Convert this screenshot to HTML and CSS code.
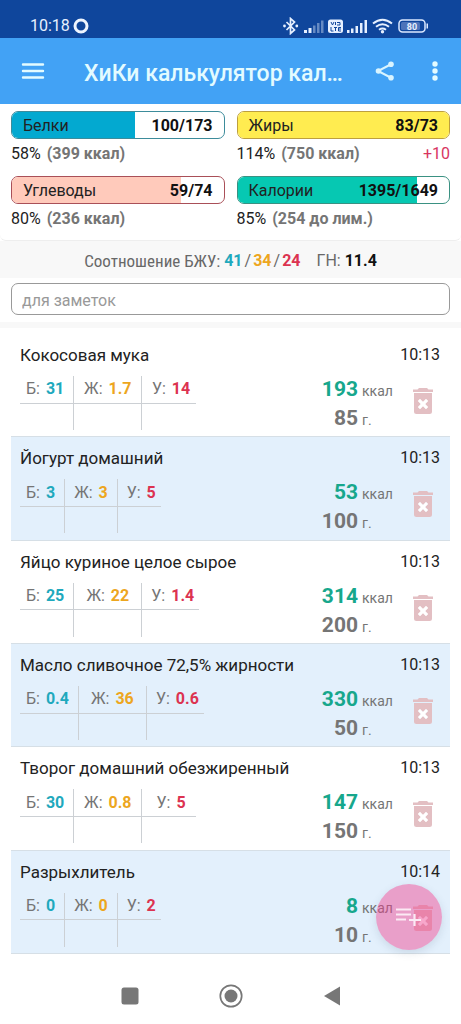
FILE: index.html
```html
<!DOCTYPE html>
<html lang="ru">
<head>
<meta charset="utf-8">
<meta name="viewport" content="width=device-width, initial-scale=1">
<title>ХиКи калькулятор калорий</title>
<link rel="stylesheet" href="styles.css">
</head>
<body>
<svg class="sprite" aria-hidden="true">
  <symbol id="trash" viewBox="0 0 22 28">
    <path fill="#e3bfc3" d="M7 1h8l1.500 1.500H21V5H1V2.500h4.500z"/>
    <path fill="#e3bfc3" fill-rule="evenodd" d="M2 6h18v18.500a2.500 2.500 0 0 1-2.500 2.500h-13A2.500 2.500 0 0 1 2 24.500zM8 12l-2 2 3 3-3 3 2 2 3-3 3 3 2-2-3-3 3-3-2-2-3 3z"/>
    <path class="cross" d="M8 12l-2 2 3 3-3 3 2 2 3-3 3 3 2-2-3-3 3-3-2-2-3 3z"/>
  </symbol>
</svg>
<div class="screen">
  <div class="status">
    <span class="clock">10:18</span>
    <svg class="ring" viewBox="0 0 16 16"><circle cx="8" cy="8" r="6" fill="none" stroke="#eef5ff" stroke-width="3"/></svg>
    <svg class="signals" viewBox="0 0 146 18" aria-hidden="true">
      <g fill="none" stroke="#e6f0ff" stroke-width="1.700"><path d="M3.500 5l8 8-4 3.500v-15l4 3.500-8 8"/></g>
      <circle cx="1.500" cy="9" r="1.400" fill="#e6f0ff"/><circle cx="13.800" cy="9" r="1.400" fill="#e6f0ff"/>
      <g fill="#e6f0ff"><path d="M21 13h3v3h-3zM25.500 11h3v5h-3z"/><path opacity=".4" d="M30 8.500h2.500V16H30zM34 6h2.500v10H34zM38 3.500h2.500V16H38z"/>
      <rect x="45" y="2.500" width="15" height="13.500" rx="2.500"/>
      <path d="M64 13h2.500v3H64zM68 11.500h2.500V16H68zM72.500 9H75v7h-2.500zM77 6h2.500v10H77zM81.500 3H84v13h-2.500z"/></g>
      <path d="M48 5l1.500 3L51 5M52.500 5v3M54 5.500h3v2.500h-3M48 10v4h2.500M51 10.500h3M52.500 10.500V14M58 10.500h-2.500V14H58M55.500 12H58" fill="none" stroke="#0f469c" stroke-width="1"/>
      <g fill="none" stroke="#e6f0ff" stroke-width="2"><path d="M90 6.500q9.500-7.500 19 0M93 9.800q6.500-5 13 0M96 12.800q3.500-2.500 7 0"/></g><circle cx="99.500" cy="14.800" r="1.700" fill="#e6f0ff"/>
      <rect x="116" y="3" width="26" height="12" rx="3.500" fill="none" stroke="#dce9ff" stroke-width="1.500"/><rect x="118" y="5" width="19" height="8" rx="1.500" fill="#4c73b9"/><path d="M143.500 6.500h1.500v5h-1.500z" fill="#dce9ff"/>
      <text class="battery" x="129" y="12.500" text-anchor="middle">80</text>
    </svg>
  </div>

  <header class="appbar">
    <button class="icon-btn" aria-label="Меню"><svg width="24" height="18" viewBox="0 0 24 18"><path d="M2 2.500h20M2 9h20M2 15.500h20" stroke="#e3fbff" stroke-width="2.400" stroke-linecap="round"/></svg></button>
    <h1 class="title">ХиКи калькулятор кал…</h1>
    <button class="icon-btn share" aria-label="Поделиться"><svg width="22" height="22" viewBox="0 0 22 22"><path d="M17.500 4L4 11l13.500 7" fill="none" stroke="#d9f4ff" stroke-width="2"/><g fill="#d9f4ff"><circle cx="17" cy="4.200" r="2.800"/><circle cx="4.500" cy="11" r="2.800"/><circle cx="17" cy="17.800" r="2.800"/></g></svg></button>
    <button class="icon-btn" aria-label="Ещё"><svg width="8" height="22" viewBox="0 0 8 22"><g fill="#e3fbff"><circle cx="4" cy="4" r="2.700"/><circle cx="4" cy="11" r="2.700"/><circle cx="4" cy="18" r="2.700"/></g></svg></button>
  </header>

  <section class="totals">
    <div class="total">
      <div class="bar protein"><span class="fill" style="width:58%"></span><span class="label">Белки</span><b>100/173</b></div>
      <p class="detail">58% <b>(399 ккал)</b></p>
    </div>
    <div class="total">
      <div class="bar fat"><span class="fill" style="width:100%"></span><span class="label">Жиры</span><b>83/73</b></div>
      <p class="detail">114% <b>(750 ккал)</b><span class="over">+10</span></p>
    </div>
    <div class="total">
      <div class="bar carbs"><span class="fill" style="width:80%"></span><span class="label">Углеводы</span><b>59/74</b></div>
      <p class="detail">80% <b>(236 ккал)</b></p>
    </div>
    <div class="total">
      <div class="bar energy"><span class="fill" style="width:85%"></span><span class="label">Калории</span><b>1395/1649</b></div>
      <p class="detail">85% <b>(254 до лим.)</b></p>
    </div>
  </section>

  <div class="ratio">
    <span class="ratio-name">Соотношение БЖУ:</span>
    <span class="ratio-values"><b class="p">41</b><i>/</i><b class="f">34</b><i>/</i><b class="c">24</b></span>
    <span class="load">ГН: <b>11.4</b></span>
  </div>

  <div class="notes"><input class="note" type="text" placeholder="для заметок" aria-label="Заметки"></div>

  <ul class="foods">
    <li class="food">
      <h2 class="name">Кокосовая мука</h2><time class="time">10:13</time>
      <table class="macros wide"><tr><td>Б: <b class="p">31</b></td><td>Ж: <b class="f">1.7</b></td><td>У: <b class="c">14</b></td></tr><tr><td></td><td></td><td></td></tr></table>
      <div class="amount"><b class="kcal">193</b><span>ккал</span><b>85</b><span>г.</span></div>
      <button class="delete" aria-label="Удалить"><svg width="22" height="28"><use href="#trash"/></svg></button>
    </li>
    <li class="food">
      <h2 class="name">Йогурт домашний</h2><time class="time">10:13</time>
      <table class="macros"><tr><td>Б: <b class="p">3</b></td><td>Ж: <b class="f">3</b></td><td>У: <b class="c">5</b></td></tr><tr><td></td><td></td><td></td></tr></table>
      <div class="amount"><b class="kcal">53</b><span>ккал</span><b>100</b><span>г.</span></div>
      <button class="delete" aria-label="Удалить"><svg width="22" height="28"><use href="#trash"/></svg></button>
    </li>
    <li class="food">
      <h2 class="name">Яйцо куриное целое сырое</h2><time class="time">10:13</time>
      <table class="macros wide"><tr><td>Б: <b class="p">25</b></td><td>Ж: <b class="f">22</b></td><td>У: <b class="c">1.4</b></td></tr><tr><td></td><td></td><td></td></tr></table>
      <div class="amount"><b class="kcal">314</b><span>ккал</span><b>200</b><span>г.</span></div>
      <button class="delete" aria-label="Удалить"><svg width="22" height="28"><use href="#trash"/></svg></button>
    </li>
    <li class="food">
      <h2 class="name">Масло сливочное 72,5% жирности</h2><time class="time">10:13</time>
      <table class="macros wide"><tr><td>Б: <b class="p">0.4</b></td><td>Ж: <b class="f">36</b></td><td>У: <b class="c">0.6</b></td></tr><tr><td></td><td></td><td></td></tr></table>
      <div class="amount"><b class="kcal">330</b><span>ккал</span><b>50</b><span>г.</span></div>
      <button class="delete" aria-label="Удалить"><svg width="22" height="28"><use href="#trash"/></svg></button>
    </li>
    <li class="food">
      <h2 class="name">Творог домашний обезжиренный</h2><time class="time">10:13</time>
      <table class="macros wide"><tr><td>Б: <b class="p">30</b></td><td>Ж: <b class="f">0.8</b></td><td>У: <b class="c">5</b></td></tr><tr><td></td><td></td><td></td></tr></table>
      <div class="amount"><b class="kcal">147</b><span>ккал</span><b>150</b><span>г.</span></div>
      <button class="delete" aria-label="Удалить"><svg width="22" height="28"><use href="#trash"/></svg></button>
    </li>
    <li class="food">
      <h2 class="name">Разрыхлитель</h2><time class="time">10:14</time>
      <table class="macros"><tr><td>Б: <b class="p">0</b></td><td>Ж: <b class="f">0</b></td><td>У: <b class="c">2</b></td></tr><tr><td></td><td></td><td></td></tr></table>
      <div class="amount"><b class="kcal">8</b><span>ккал</span><b>10</b><span>г.</span></div>
      <button class="delete" aria-label="Удалить"><svg width="22" height="28"><use href="#trash"/></svg></button>
    </li>
  </ul>

  <nav class="sysnav">
    <button class="nav-btn" aria-label="Недавние"><svg width="24" height="24" viewBox="0 0 24 24"><rect x="3.500" y="3.500" width="17" height="17" rx="2.500" fill="#777"/></svg></button>
    <button class="nav-btn" aria-label="Домой"><svg width="24" height="24" viewBox="0 0 24 24"><circle cx="12" cy="12" r="10.700" fill="none" stroke="#777" stroke-width="1.700"/><circle cx="12" cy="12" r="6.500" fill="#777"/></svg></button>
    <button class="nav-btn" aria-label="Назад"><svg width="24" height="24" viewBox="0 0 24 24"><path d="M4 12L20 2.500v19z" fill="#777"/></svg></button>
  </nav>
</div>
<button class="fab" aria-label="Добавить продукт"><svg width="26" height="20" viewBox="0 0 26 20"><path d="M0 2.500h15M0 7.500h15M0 12.500h10M18.500 7v12M13 13h12" fill="none" stroke="#fbeaf4" stroke-width="2.200"/></svg></button>
</body>
</html>
```

FILE: styles.css
```css
* { box-sizing: border-box; }

body {
  margin: 0;
  background: #fff;
  color: #222;
  font: 16px/20px Roboto, "Noto Sans", sans-serif;
}

button {
  display: flex;
  align-items: center;
  justify-content: center;
  padding: 0;
  border: 0;
  background: none;
}

b { font-weight: 700; }
h1, h2, p, ul { margin: 0; padding: 0; }
.sprite { display: none; }

.p { color: #1fa9bd; }
.f { color: #eda61e; }
.c { color: #dc3350; }

.screen {
  display: flex;
  flex-direction: column;
  min-height: 100vh;
}

.status {
  display: flex;
  align-items: center;
  height: 38px;
  padding: 13px 32px 0 30px;
  background: #0f469c;
  color: #e6f0ff;
}
.ring { width: 16px; height: 16px; margin-left: 3px; }
.signals { width: 146px; height: 18px; margin-left: auto; }
.battery { font-size: 9px; font-weight: 700; fill: #e6f0ff; }

.appbar {
  display: flex;
  align-items: center;
  height: 66px;
  padding: 0 9px 0 16px;
  background: #42a2f5;
}
.icon-btn { width: 34px; height: 44px; flex: none; }
.title {
  flex: 1;
  margin: 0 8px 0 34px;
  padding-top: 5px;
  overflow: hidden;
  white-space: nowrap;
  text-overflow: ellipsis;
  color: #e3fbff;
  font-size: 23px;
  line-height: 30px;
  font-weight: 500;
}
.share { margin-right: 16px; }

.totals {
  display: grid;
  grid-template-columns: 1fr 1fr;
  gap: 10px 12px;
  padding: 7px 11px 9px;
  border-radius: 0 0 6px 6px;
  border-bottom: 1px solid #eee;
}
.bar {
  position: relative;
  display: flex;
  align-items: center;
  justify-content: space-between;
  height: 28px;
  padding: 2px 11px 0;
  border: 1px solid;
  border-radius: 7px;
  overflow: hidden;
}
.bar b, .label { position: relative; color: #111; }
.bar .label { color: #222; }
.fill { position: absolute; inset: 0 auto 0 0; }
.protein { border-color: #3d8c9b; }
.protein .fill { background: #03a9d0; }
.fat { border-color: #bd9f3e; }
.fat .fill { background: #ffec50; }
.carbs { border-color: #a94f58; }
.carbs .fill { background: #ffcabb; }
.energy { border-color: #3a9182; }
.energy .fill { background: #06c8b2; }
.detail { display: flex; gap: 6px; padding-top: 2px; line-height: 25px; }
.detail b { color: #757575; }
.over { margin-left: auto; color: #d8355f; }

.ratio {
  display: flex;
  align-items: center;
  justify-content: center;
  height: 37px;
  background: #f8f8f8;
  color: #686868;
  padding-top: 2px;
}
.ratio-name { font-family: "Roboto Condensed", Roboto, sans-serif; font-size: 17px; }
.ratio-values { margin-left: 4px; }
.ratio-values i { margin: 0 2px; font-style: normal; }
.load { margin-left: 16px; }
.load b { color: #111; }

.notes {
  padding: 5px 11px 7px;
  border-bottom: 6px solid #f8f8f8;
}
.note {
  display: block;
  width: 100%;
  height: 32px;
  padding: 2px 10px 0;
  border: 1px solid #999;
  border-radius: 7px;
  font: inherit;
}
.note::placeholder { color: #999; opacity: 1; }

.foods {
  flex: 1;
  display: grid;
  grid-auto-rows: 1fr;
  padding: 6px 11px 0;
  list-style: none;
}
.food {
  display: grid;
  grid-template-columns: 1fr auto auto;
  align-content: start;
  padding: 9px 10px 0 9px;
  border-bottom: 1px solid #d6dfe6;
}
.food:nth-child(even) { background: #e3f0fc; }
.name {
  grid-column: 1 / 3;
  font-size: 17px;
  line-height: 24px;
  font-weight: 400;
}
.time { line-height: 24px; text-align: right; }

.macros {
  justify-self: start;
  align-self: start;
  margin-top: 9px;
  border-collapse: collapse;
  color: #757575;
}
.macros td {
  height: 27px;
  padding: 0 9px;
  border-right: 1px solid #ccd0d4;
  text-align: center;
  white-space: nowrap;
}
.macros b { margin-left: 2px; }
.macros td:first-child { padding-left: 6px; }
.macros td:last-child { padding-right: 5px; border-right: 0; }
.macros tr:first-child td { border-bottom: 1px solid #ccd0d4; }
.wide td:nth-child(2) { min-width: 68px; }
.wide td:nth-child(3) { min-width: 54px; }

.amount {
  display: grid;
  grid-template-columns: auto 31px;
  column-gap: 4px;
  margin-top: 9px;
  color: #757575;
  font-size: 14px;
  line-height: 27px;
  align-items: baseline;
}
.amount b { font-size: 21px; text-align: right; }
.amount .kcal { color: #17a78c; }
.cross { fill: #fff; }
.delete { align-self: start; width: 22px; height: 28px; margin: 20px 6px 0 19px; }

.sysnav {
  display: flex;
  align-items: center;
  justify-content: center;
  gap: 77px;
  height: 70px;
  padding-top: 14px;
}
.nav-btn { width: 24px; height: 40px; }

.fab {
  position: fixed;
  right: 19px;
  bottom: 74px;
  width: 66px;
  height: 66px;
  border-radius: 50%;
  background: rgba(240, 60, 140, .45);
  box-shadow: 0 3px 8px rgba(60, 80, 110, .15);
}
```
